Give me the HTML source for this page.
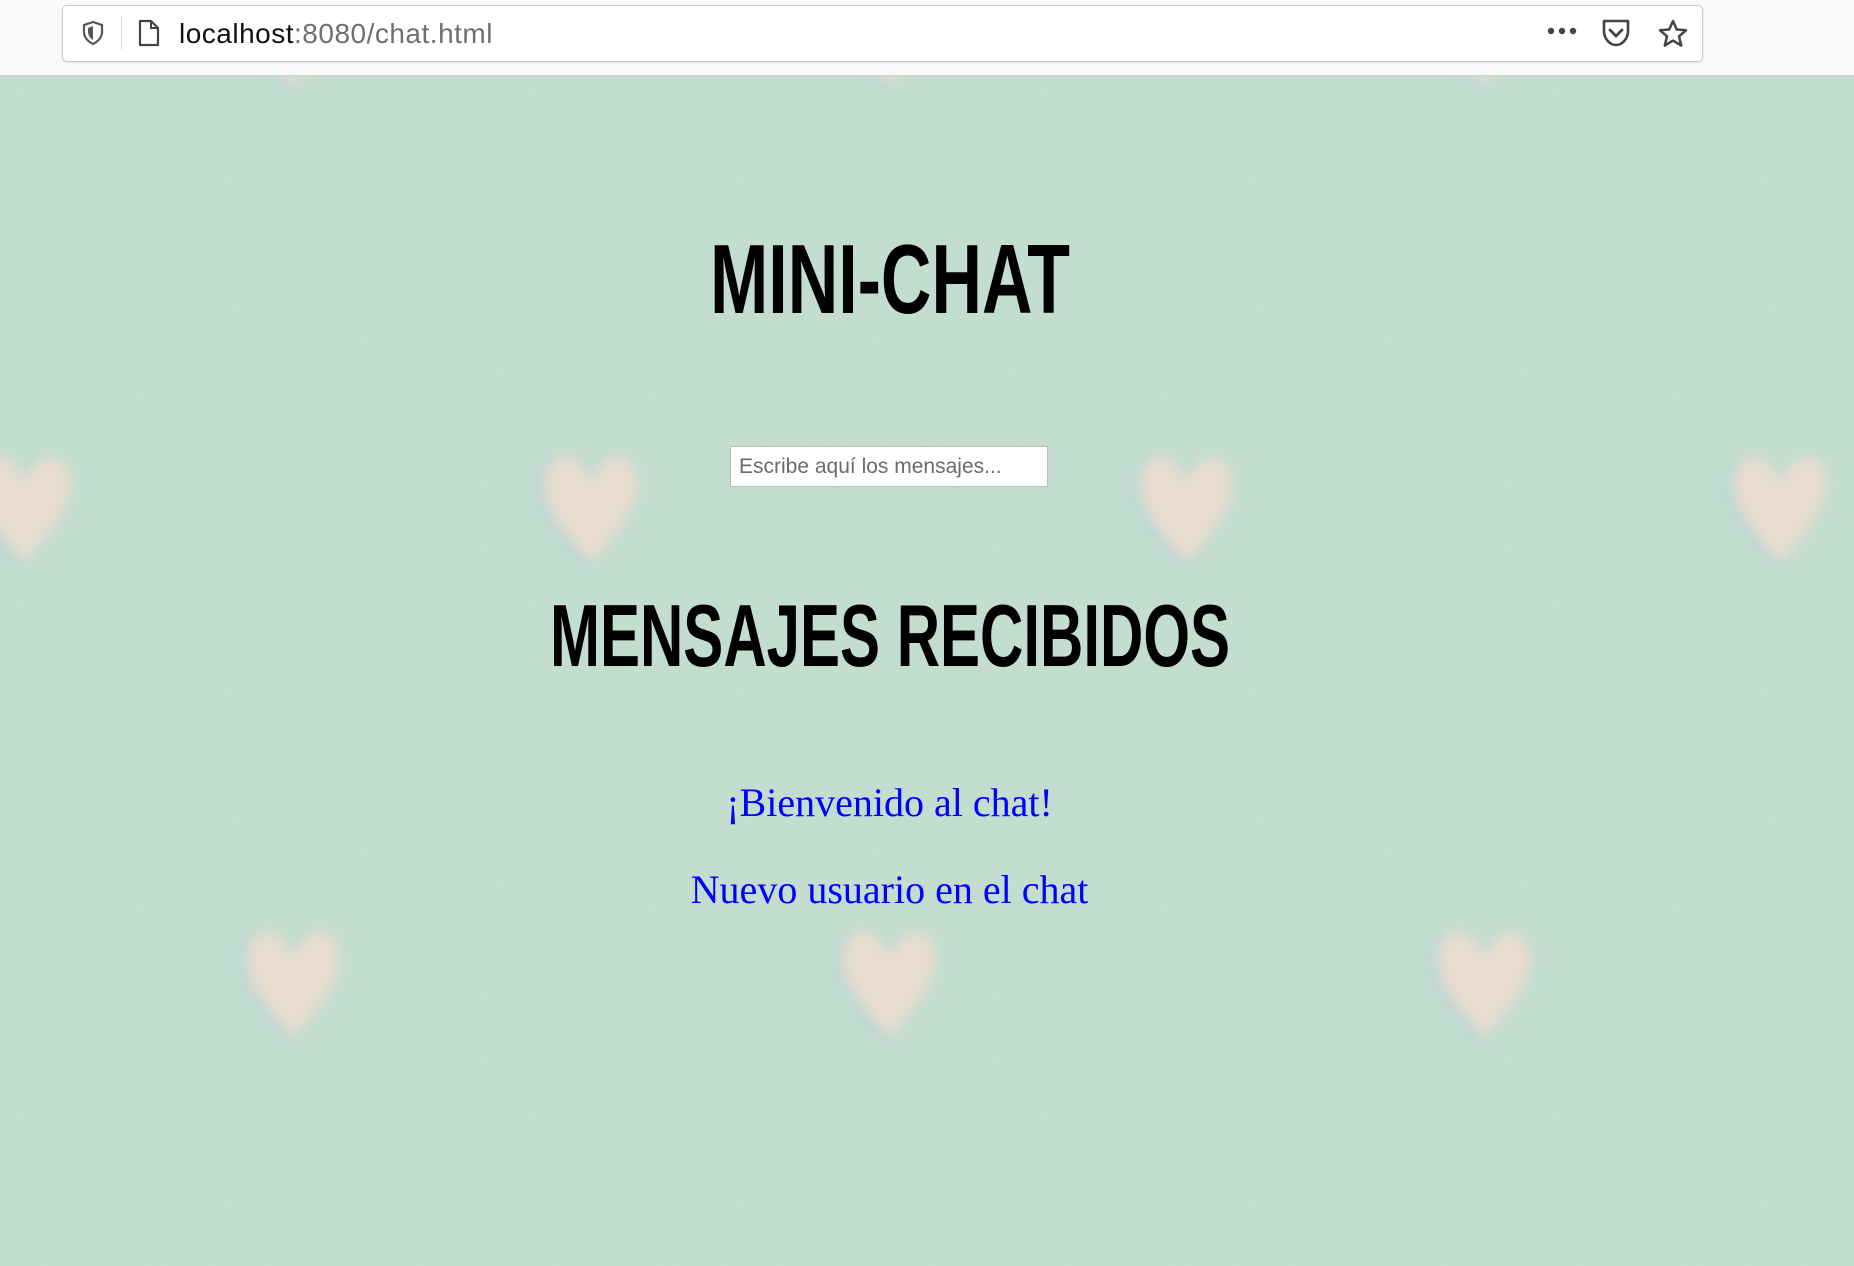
<!DOCTYPE html>
<html><head><meta charset="utf-8"><style>
html,body{margin:0;padding:0;width:1854px;height:1266px;overflow:hidden;background:#bfdccd;font-family:"Liberation Sans",sans-serif}
.bar{position:absolute;left:0;top:0;width:1854px;height:75px;background:#f9f9fa;border-bottom:1px solid #d6d6d6}
.url{position:absolute;left:62px;top:5px;width:1639px;height:55px;background:#fff;border:1px solid #c8c8c8;border-radius:5px;box-shadow:0 1px 2px rgba(0,0,0,.08)}
.urltext{position:absolute;left:116px;top:12px;font-size:28px;letter-spacing:0.5px;color:#111}
.urltext span{color:#6f6f6f}
.sep{position:absolute;left:58px;top:10px;width:1px;height:34px;background:#ddd}
.bg{position:absolute;left:0;top:76px}
input{position:absolute;left:730px;top:446px;width:318px;height:41px;box-sizing:border-box;border:1px solid #bbb;background:#fff;font-family:"Liberation Sans","DejaVu Sans",sans-serif;font-size:21px;padding:0 8px;color:#666}
input::placeholder{color:#6b6b6b}
.msg{position:absolute;left:0;width:1779px;text-align:center;font-family:"Liberation Serif",serif;color:#0000ff;font-size:40px}
</style></head><body>
<svg class="bg" width="1854" height="1190" viewBox="0 76 1854 1190">
<defs>
<filter id="b" x="-30%" y="-30%" width="160%" height="160%"><feGaussianBlur stdDeviation="6"/></filter>
<filter id="n"><feTurbulence type="fractalNoise" baseFrequency="0.5" numOctaves="2" seed="3"/><feColorMatrix values="0 0 0 0 0.6  0 0 0 0 0.76  0 0 0 0 0.68  0 0 0 0.7 -0.1"/></filter>
<g id="h"><path d="M0,55 C-30,20 -52,-5 -45,-35 C-40,-58 -10,-58 0,-25 C10,-58 40,-58 45,-35 C52,-5 30,20 0,55Z" fill="#b5d1dc" opacity=".6" transform="translate(-6,4) scale(1.1)"/><path d="M0,55 C-30,20 -52,-5 -45,-35 C-40,-58 -10,-58 0,-25 C10,-58 40,-58 45,-35 C52,-5 30,20 0,55Z" fill="#eedccd"/></g>
</defs>
<rect x="0" y="76" width="1854" height="1190" fill="#c0dccd"/>
<rect x="0" y="76" width="1854" height="1190" filter="url(#n)"/>
<g filter="url(#b)" opacity=".85">
<use href="#h" x="24" y="508"/><use href="#h" x="591" y="508"/><use href="#h" x="1186" y="508"/><use href="#h" x="1780" y="508"/>
<use href="#h" x="293" y="983"/><use href="#h" x="889" y="983"/><use href="#h" x="1484" y="983"/>
<use href="#h" x="293" y="30"/><use href="#h" x="889" y="30"/><use href="#h" x="1484" y="30"/>
</g>
</svg>
<div class="bar"><div class="url">
<svg style="position:absolute;left:18px;top:14px" width="24" height="26" viewBox="0 0 24 26"><path d="M12 2 L21 5 V12 C21 18 16 22 12 24 C8 22 3 18 3 12 V5 Z" fill="none" stroke="#555" stroke-width="2.2"/><path d="M12 6 V20 C9 18 7 15 7 12 V8Z" fill="#555"/></svg>
<div class="sep"></div>
<svg style="position:absolute;left:74px;top:12px" width="24" height="30" viewBox="0 0 24 30"><path d="M3 3 H14 L21 10 V27 H3 Z" fill="none" stroke="#444" stroke-width="2.2" stroke-linejoin="round"/><path d="M14 3 V10 H21" fill="none" stroke="#444" stroke-width="2"/></svg>
<div class="urltext">localhost<span>:8080/chat.html</span></div>
<svg style="position:absolute;left:1483px;top:19px" width="34" height="12"><circle cx="5" cy="6" r="3.2" fill="#444"/><circle cx="16" cy="6" r="3.2" fill="#444"/><circle cx="27" cy="6" r="3.2" fill="#444"/></svg>
<svg style="position:absolute;left:1537px;top:12px" width="32" height="30" viewBox="0 0 32 30"><path d="M4 3 H28 V13 C28 21 22 27 16 27 C10 27 4 21 4 13 Z" fill="none" stroke="#444" stroke-width="2.6" stroke-linejoin="round"/><path d="M10 12 L16 18 L22 12" fill="none" stroke="#444" stroke-width="2.8" stroke-linecap="round"/></svg>
<svg style="position:absolute;left:1594px;top:12px" width="32" height="32" viewBox="0 0 32 32"><path d="M16 3 L19.8 11.5 L29 12.3 L22 18.3 L24.2 27.5 L16 22.6 L7.8 27.5 L10 18.3 L3 12.3 L12.2 11.5 Z" fill="none" stroke="#444" stroke-width="2.5" stroke-linejoin="round"/></svg>
</div></div>
<svg style="position:absolute;left:0;top:0" width="1854" height="800">
<text x="710" y="313" textLength="360" lengthAdjust="spacingAndGlyphs" font-family="Liberation Sans Narrow, Liberation Sans, sans-serif" font-weight="bold" font-size="98" fill="#000">MINI-CHAT</text>
<text x="550" y="666" textLength="680" lengthAdjust="spacingAndGlyphs" font-family="Liberation Sans Narrow, Liberation Sans, sans-serif" font-weight="bold" font-size="88" fill="#000">MENSAJES RECIBIDOS</text>
</svg>
<input placeholder="Escribe aquí los mensajes...">
<div class="msg" style="top:779px">¡Bienvenido al chat!</div>
<div class="msg" style="top:866px">Nuevo usuario en el chat</div>
</body></html>
